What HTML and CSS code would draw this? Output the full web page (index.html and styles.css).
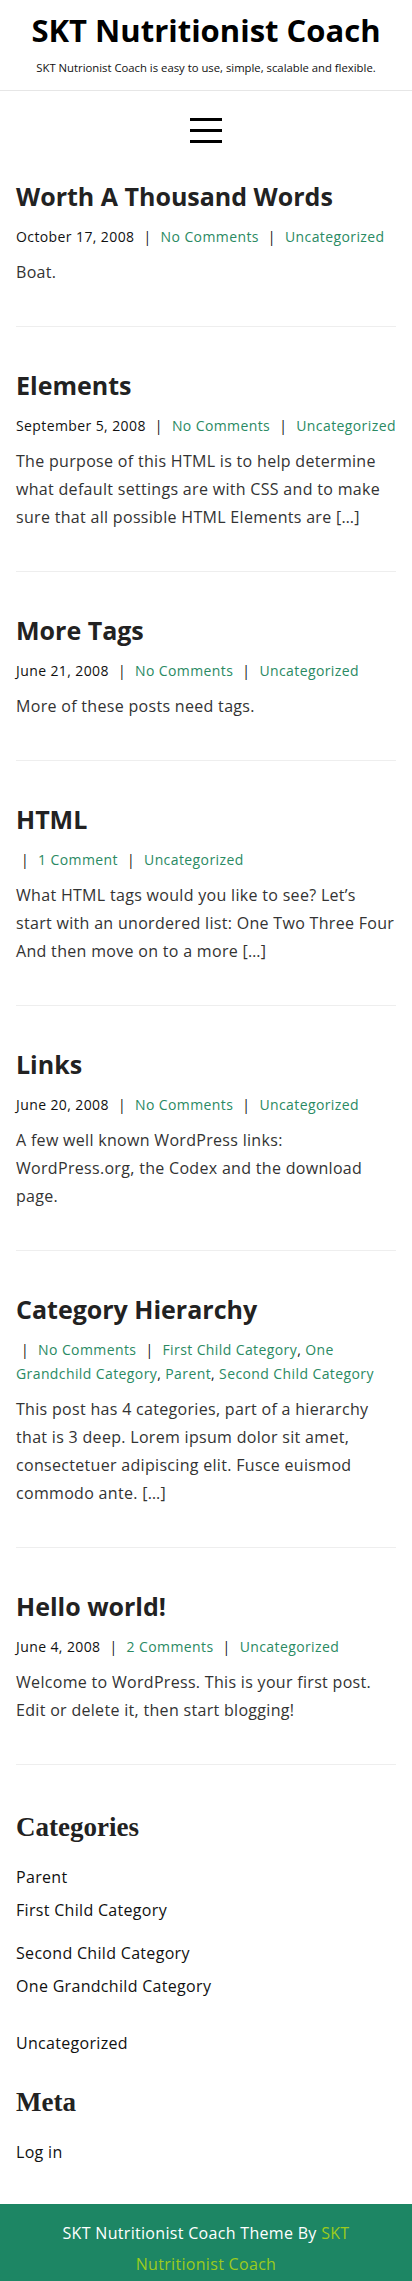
FILE: index.html
```html
<!DOCTYPE html>
<html lang="en">
<head>
  <meta charset="UTF-8">
  <meta name="viewport" content="width=device-width, initial-scale=1.0">
  <title>SKT Nutritionist Coach</title>
  <link rel="stylesheet" href="styles.css">
</head>
<body>
  <header class="site-header">
    <h1 class="site-title"><a href="#">SKT Nutritionist Coach</a></h1>
    <p class="site-tagline">SKT Nutrionist Coach is easy to use, simple, scalable and flexible.</p>
  </header>

  <nav class="main-nav">
    <button class="menu-toggle" aria-label="Menu">
      <span></span><span></span><span></span>
    </button>
  </nav>

  <main class="content">
    <article class="post">
      <h2 class="post-title"><a href="#">Worth A Thousand Words</a></h2>
      <div class="post-meta">
        <span class="post-date">October 17, 2008</span><span class="sep">|</span><a href="#">No Comments</a><span class="sep">|</span><a href="#">Uncategorized</a>
      </div>
      <p class="post-excerpt">Boat.</p>
    </article>

    <article class="post">
      <h2 class="post-title"><a href="#">Elements</a></h2>
      <div class="post-meta">
        <span class="post-date">September 5, 2008</span><span class="sep">|</span><a href="#">No Comments</a><span class="sep">|</span><a href="#">Uncategorized</a>
      </div>
      <p class="post-excerpt">The purpose of this HTML is to help determine what default settings are with CSS and to make sure that all possible HTML Elements are [&hellip;]</p>
    </article>

    <article class="post">
      <h2 class="post-title"><a href="#">More Tags</a></h2>
      <div class="post-meta">
        <span class="post-date">June 21, 2008</span><span class="sep">|</span><a href="#">No Comments</a><span class="sep">|</span><a href="#">Uncategorized</a>
      </div>
      <p class="post-excerpt">More of these posts need tags.</p>
    </article>

    <article class="post">
      <h2 class="post-title"><a href="#">HTML</a></h2>
      <div class="post-meta">
        <span class="sep first">|</span><a href="#">1 Comment</a><span class="sep">|</span><a href="#">Uncategorized</a>
      </div>
      <p class="post-excerpt">What HTML tags would you like to see? Let&rsquo;s start with an unordered list: One Two Three Four And then move on to a more [&hellip;]</p>
    </article>

    <article class="post">
      <h2 class="post-title"><a href="#">Links</a></h2>
      <div class="post-meta">
        <span class="post-date">June 20, 2008</span><span class="sep">|</span><a href="#">No Comments</a><span class="sep">|</span><a href="#">Uncategorized</a>
      </div>
      <p class="post-excerpt">A few well known WordPress links: WordPress.org, the Codex and the download page.</p>
    </article>

    <article class="post">
      <h2 class="post-title"><a href="#">Category Hierarchy</a></h2>
      <div class="post-meta">
        <span class="sep first">|</span><a href="#">No Comments</a><span class="sep">|</span><a href="#">First Child Category</a>, <a href="#">One Grandchild Category</a>, <a href="#">Parent</a>, <a href="#">Second Child Category</a>
      </div>
      <p class="post-excerpt">This post has 4 categories, part of a hierarchy that is 3 deep. Lorem ipsum dolor sit amet, consectetuer adipiscing elit. Fusce euismod commodo ante. [&hellip;]</p>
    </article>

    <article class="post">
      <h2 class="post-title"><a href="#">Hello world!</a></h2>
      <div class="post-meta">
        <span class="post-date">June 4, 2008</span><span class="sep">|</span><a href="#">2 Comments</a><span class="sep">|</span><a href="#">Uncategorized</a>
      </div>
      <p class="post-excerpt">Welcome to WordPress. This is your first post. Edit or delete it, then start blogging!</p>
    </article>
  </main>

  <aside class="sidebar">
    <section class="widget">
      <h3 class="widget-title">Categories</h3>
      <ul class="cat-list">
        <li><a href="#">Parent</a>
          <ul class="children">
            <li><a href="#">First Child Category</a></li>
            <li><a href="#">Second Child Category</a>
              <ul class="children">
                <li><a href="#">One Grandchild Category</a></li>
              </ul>
            </li>
          </ul>
        </li>
        <li><a href="#">Uncategorized</a></li>
      </ul>
    </section>

    <section class="widget">
      <h3 class="widget-title">Meta</h3>
      <ul class="meta-list">
        <li><a href="#">Log in</a></li>
      </ul>
    </section>
  </aside>

  <footer class="site-footer">
    <p>SKT Nutritionist Coach Theme By <a href="#">SKT Nutritionist Coach</a></p>
  </footer>
</body>
</html>
```

FILE: styles.css
```css
body {
  margin: 0;
  font-family: "Open Sans", Arial, sans-serif;
  font-size: 16px;
  line-height: 28px;
  letter-spacing: 0.31px;
  color: #333;
  background: #fff;
}
a {
  text-decoration: none;
}

.site-header {
  text-align: center;
  padding: 10px 16px 14px;
  border-bottom: 1px solid #e6e6e6;
}
.site-title {
  margin: 0;
  font-size: 31px;
  line-height: 40px;
  font-weight: 700;
  letter-spacing: 0;
}
.site-title a {
  color: #000;
}
.site-tagline {
  margin: 10px 0 0;
  font-size: 11.3px;
  line-height: 16px;
  letter-spacing: 0;
  color: #111;
}

.main-nav {
  display: flex;
  justify-content: center;
  padding: 27px 0 35px;
}
.menu-toggle {
  display: flex;
  flex-direction: column;
  gap: 8px;
  width: 32px;
  padding: 0;
  border: none;
  background: none;
  cursor: pointer;
}
.menu-toggle span {
  display: block;
  height: 3px;
  background: #000;
}

.content,
.sidebar {
  padding: 0 16px;
}
.sidebar {
  padding-top: 4px;
}
.post {
  padding-bottom: 40px;
  margin-bottom: 40px;
  border-bottom: 1px solid #eee;
}
.post-title {
  margin: 0;
  font-size: 25px;
  line-height: 36px;
  font-weight: 700;
  letter-spacing: 0;
}
.post-title a {
  color: #222;
}
.post-meta {
  margin-top: 11px;
  font-size: 14px;
  line-height: 24px;
  letter-spacing: 0.4px;
  color: #111;
}
.post-meta a {
  color: #2a8a63;
}
.sep {
  margin: 0 9px;
}
.sep.first {
  margin-left: 5px;
}
.post-excerpt {
  margin: 9px 0 0;
}

.widget {
  margin-bottom: 29px;
}
.widget:last-child {
  margin-bottom: 40px;
}
.widget-title {
  margin: 0 0 20px;
  font-family: "Liberation Serif", "Times New Roman", serif;
  font-size: 27px;
  line-height: 36px;
  font-weight: 700;
  letter-spacing: 0;
  color: #222;
}
.cat-list,
.meta-list,
.children {
  list-style: none;
  margin: 0;
  padding: 0;
}
.cat-list li,
.meta-list li {
  line-height: 24px;
}
.cat-list a,
.meta-list a {
  color: #111;
}
.cat-list > li + li {
  margin-top: 33px;
}
.children {
  margin-top: 9px;
}
.children > li + li {
  margin-top: 19px;
}

.site-footer {
  background: #1d8664;
  color: #fff;
  text-align: center;
  padding: 14px 40px 16px;
}
.site-footer p {
  margin: 0;
  line-height: 31px;
}
.site-footer a {
  color: #9ccb1c;
}
```
